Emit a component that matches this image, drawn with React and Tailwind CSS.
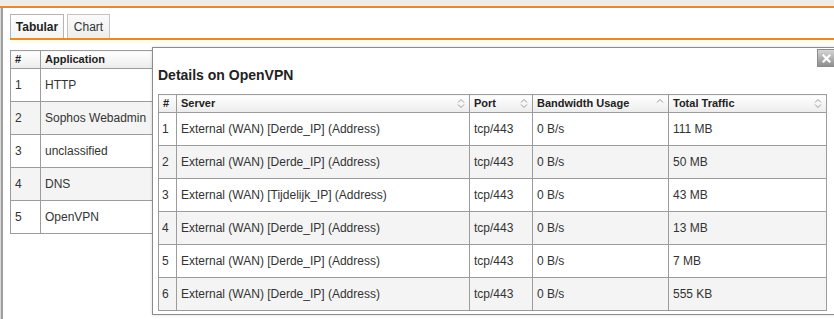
import React from "react";

const apps = [
  { id: 1, name: "HTTP" },
  { id: 2, name: "Sophos Webadmin" },
  { id: 3, name: "unclassified" },
  { id: 4, name: "DNS" },
  { id: 5, name: "OpenVPN" },
];

const servers = [
  { id: 1, server: "External (WAN) [Derde_IP] (Address)", port: "tcp/443", bw: "0 B/s", total: "111 MB" },
  { id: 2, server: "External (WAN) [Derde_IP] (Address)", port: "tcp/443", bw: "0 B/s", total: "50 MB" },
  { id: 3, server: "External (WAN) [Tijdelijk_IP] (Address)", port: "tcp/443", bw: "0 B/s", total: "43 MB" },
  { id: 4, server: "External (WAN) [Derde_IP] (Address)", port: "tcp/443", bw: "0 B/s", total: "13 MB" },
  { id: 5, server: "External (WAN) [Derde_IP] (Address)", port: "tcp/443", bw: "0 B/s", total: "7 MB" },
  { id: 6, server: "External (WAN) [Derde_IP] (Address)", port: "tcp/443", bw: "0 B/s", total: "555 KB" },
];

// little up/down chevrons used in sortable headers
const SortIcon = ({ up = true, down = true }) => (
  <svg width="8" height="11" viewBox="0 0 8 11" className="shrink-0">
    {up && <path d="M1 4.5 L4 1.5 L7 4.5" fill="none" stroke="#9a9a9a" strokeWidth="1" />}
    {down && <path d="M1 6.5 L4 9.5 L7 6.5" fill="none" stroke="#9a9a9a" strokeWidth="1" />}
  </svg>
);

const Th = ({ children, sort, className = "" }) => (
  <th className={`border border-[#9c9c9c] bg-gradient-to-b from-white to-[#ececec] px-[4px] h-[17px] text-left text-[11px] font-bold text-[#222] ${className}`}>
    <div className="flex items-center justify-between">
      <span>{children}</span>
      {sort === "both" && <SortIcon />}
      {sort === "up" && <SortIcon down={false} />}
    </div>
  </th>
);

export default function App() {
  return (
    <div className="relative w-[834px] h-[319px] overflow-hidden bg-white font-['Liberation_Sans',Arial,sans-serif] text-[#222]">
      {/* top strip */}
      <div className="h-[6px] bg-[#ededed]" />
      <div className="h-[2px] bg-[#e4892c]" />

      <div className="flex h-[311px]">
        <div className="w-[1px] bg-[#d8d8d8]" />
        <div className="w-[2px] bg-[#9e9e9e]" />
        <div className="flex-1 pl-[7px] pt-[6px]">
          {/* tabs */}
          <div className="flex gap-[3px]">
            <div className="h-[24px] w-[54px] border border-b-0 border-[#b5b5b5] bg-gradient-to-b from-white to-[#f4f4f4] flex items-center justify-center text-[12px] font-bold">
              Tabular
            </div>
            <div className="h-[24px] w-[43px] border border-b-0 border-[#c4c4c4] bg-gradient-to-b from-[#fafafa] to-[#eeeeee] flex items-center justify-center text-[12px] text-[#333]">
              Chart
            </div>
          </div>
          <div className="h-[2px] bg-[#e4892c]" />
          <div className="h-[3px] bg-[#fffbe6]" />

          {/* application table */}
          <table className="mt-[7px] w-[220px] border-collapse text-[12px]">
            <thead>
              <tr>
                <th className="w-[30px] border border-[#9c9c9c] bg-gradient-to-b from-white to-[#ececec] px-[4px] h-[17px] text-left text-[11px] font-bold">#</th>
                <th className="border border-[#9c9c9c] bg-gradient-to-b from-white to-[#ececec] px-[4px] h-[17px] text-left text-[11px] font-bold">Application</th>
              </tr>
            </thead>
            <tbody>
              {apps.map((a) => (
                <tr key={a.id} className={a.id % 2 === 0 ? "bg-[#f4f4f4]" : "bg-white"}>
                  <td className="h-[33px] border border-[#9c9c9c] px-[4px] text-[#333]">{a.id}</td>
                  <td className="h-[33px] border border-[#9c9c9c] px-[4px] text-[#333]">{a.name}</td>
                </tr>
              ))}
            </tbody>
          </table>
        </div>
      </div>

      {/* details dialog */}
      <div className="absolute left-[152px] top-[47px] w-[700px] h-[268px] border border-[#8c8c8c] bg-white shadow-[0_0_3px_rgba(0,0,0,0.15)] pl-[5px]">
        <h2 className="pt-[17px] h-[46px] text-[14px] font-bold text-[#222]">Details on OpenVPN</h2>
        <table className="w-[668px] border-collapse table-fixed text-[12px]">
          <colgroup>
            <col className="w-[18px]" />
            <col className="w-[293px]" />
            <col className="w-[63px]" />
            <col className="w-[136px]" />
            <col className="w-[158px]" />
          </colgroup>
          <thead>
            <tr>
              <Th>#</Th>
              <Th sort="both">Server</Th>
              <Th sort="both">Port</Th>
              <Th sort="up">Bandwidth Usage</Th>
              <Th sort="both">Total Traffic</Th>
            </tr>
          </thead>
          <tbody>
            {servers.map((s) => (
              <tr key={s.id} className={s.id % 2 === 0 ? "bg-[#f4f4f4]" : "bg-white"}>
                <td className="h-[33px] border border-[#9c9c9c] px-[3px] text-[#333]">{s.id}</td>
                <td className="h-[33px] border border-[#9c9c9c] px-[4px] text-[#333]">{s.server}</td>
                <td className="h-[33px] border border-[#9c9c9c] px-[4px] text-[#333]">{s.port}</td>
                <td className="h-[33px] border border-[#9c9c9c] px-[4px] text-[#333]">{s.bw}</td>
                <td className="h-[33px] border border-[#9c9c9c] px-[4px] text-[#333]">{s.total}</td>
              </tr>
            ))}
          </tbody>
        </table>
      </div>

      {/* close button */}
      <div className="absolute left-[817px] top-[49px] w-[18px] h-[18px] border border-[#8a8a8a] bg-gradient-to-b from-[#d6d6d6] to-[#8f8f8f] flex items-center justify-center">
        <svg width="9" height="9" viewBox="0 0 9 9">
          <path d="M1.5 1.5 L7.5 7.5 M7.5 1.5 L1.5 7.5" stroke="white" strokeWidth="2.2" strokeLinecap="square" />
        </svg>
      </div>
    </div>
  );
}
